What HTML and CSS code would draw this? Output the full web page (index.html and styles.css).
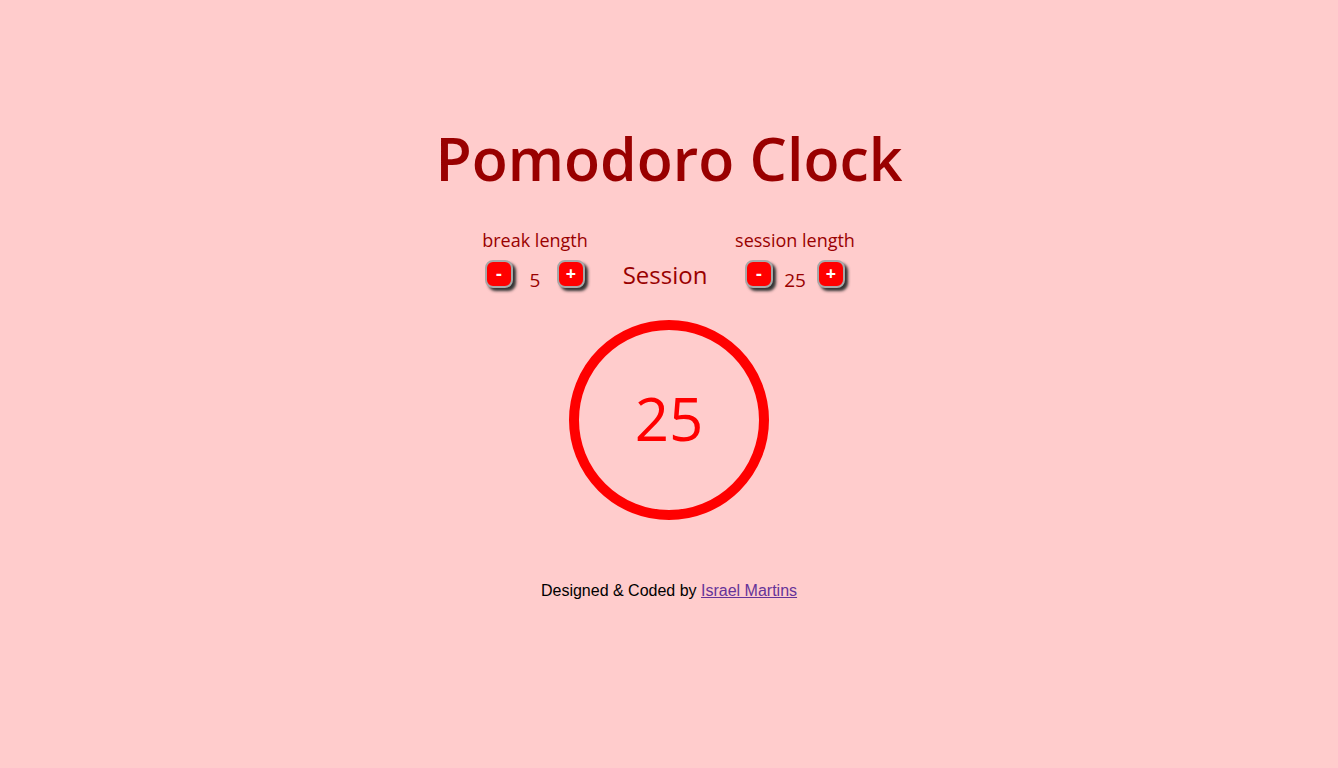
FILE: index.html
```
<!DOCTYPE html>
<html lang="en">
<head>
<meta charset="utf-8">
<title>Pomodoro Clock</title>
<link rel="stylesheet" href="styles.css">
</head>
<body>
<main class="app">
  <h1 class="title">Pomodoro Clock</h1>
  <div class="controls">
    <div class="group">
      <div class="label">break length</div>
      <div class="adjust">
        <button class="btn">-</button>
        <span class="value">5</span>
        <button class="btn">+</button>
      </div>
    </div>
    <div class="mode">Session</div>
    <div class="group">
      <div class="label">session length</div>
      <div class="adjust">
        <button class="btn">-</button>
        <span class="value">25</span>
        <button class="btn">+</button>
      </div>
    </div>
  </div>
  <div class="clock">25</div>
  <footer class="footer">Designed &amp; Coded by <a class="link" href="#">Israel Martins</a></footer>
</main>
</body>
</html>
```
FILE: styles.css
```
html, body {
  margin: 0;
  padding: 0;
}
body {
  background: #ffcccc;
  font-family: "Open Sans", sans-serif;
  color: #990000;
  height: 768px;
}
.app {
  display: flex;
  flex-direction: column;
  align-items: center;
}
.title {
  margin: 117px 0 0;
  font-size: 59px;
  font-weight: 600;
  line-height: 83px;
  color: #990000;
}
.controls {
  display: flex;
  align-items: flex-end;
  margin-top: 28px;
  padding-right: 8px;
}
.group {
  width: 130px;
  display: flex;
  flex-direction: column;
  align-items: center;
}
.label {
  font-size: 18px;
  font-weight: 400;
  line-height: 24px;
}
.adjust {
  display: flex;
  align-items: flex-start;
  margin-top: 8px;
  height: 30px;
}
.btn {
  width: 28px;
  height: 28px;
  box-sizing: border-box;
  border: 2px solid #a8a8a8;
  border-radius: 8px;
  background: #ff0000;
  color: #fff;
  font-family: "Open Sans", sans-serif;
  font-weight: 700;
  font-size: 18px;
  line-height: 20px;
  padding: 0 0 2px;
  box-shadow: 3px 3px 3px #333;
}
.value {
  width: 44px;
  text-align: center;
  font-size: 19px;
  line-height: 24px;
  padding-top: 8px;
}
.mode {
  width: 130px;
  text-align: center;
  font-size: 24px;
  line-height: 32px;
  margin-bottom: -1px;
}
.clock {
  margin-top: 30px;
  width: 200px;
  height: 200px;
  box-sizing: border-box;
  border: 10px solid #ff0000;
  border-radius: 50%;
  display: flex;
  align-items: center;
  justify-content: center;
  color: #ff0000;
  font-size: 60px;
  font-weight: 400;
  padding-bottom: 4px;
}
.footer {
  margin-top: 62px;
  font-family: "Liberation Sans", Arial, sans-serif;
  font-size: 16px;
  color: #000;
}
.link {
  color: #663399;
}
```
